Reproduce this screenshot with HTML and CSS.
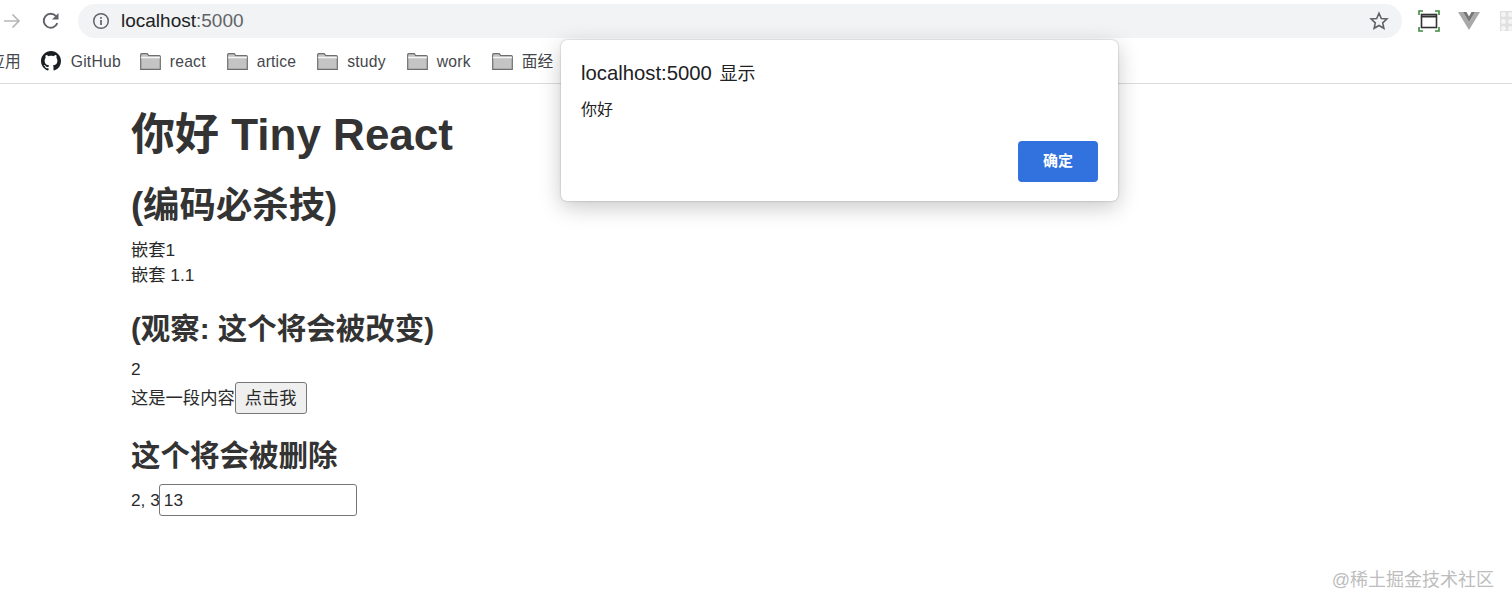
FILE: index.html
```html
<!DOCTYPE html>
<html lang="zh">
<head>
<meta charset="utf-8">
<title>Tiny React</title>
<link rel="stylesheet" href="styles.css">
</head>
<body>
<header class="chrome">
  <div class="toolbar">
    <svg class="back" width="18" height="18" viewBox="0 0 18 18"><path d="M1 9h15M9.500 2.500 16 9l-6.500 6.500" fill="none" stroke="#b4b6b8" stroke-width="1.700"/></svg>
    <svg class="reload" width="20" height="20" viewBox="0 0 20 20"><path d="M16.300 12.200A7 7 0 1 1 15 5.100" fill="none" stroke="#5f6368" stroke-width="1.900"/><path d="M17.500 2v6.500h-6.500z" fill="#5f6368"/></svg>
    <div class="omnibox">
      <svg class="info" width="18" height="18" viewBox="0 0 18 18"><circle cx="9" cy="9" r="7.300" fill="none" stroke="#5f6368" stroke-width="1.500"/><path d="M9 8v5M9 5v1.700" fill="none" stroke="#5f6368" stroke-width="1.700"/></svg>
      <span class="url">localhost<span class="port">:5000</span></span>
      <svg class="star" width="20" height="20" viewBox="0 0 20 20"><path d="M10 2.300l2.300 5.200 5.600.5-4.200 3.800 1.200 5.500L10 14.500l-4.900 2.800 1.200-5.500L2.100 8l5.600-.5z" fill="none" stroke="#5f6368" stroke-width="1.600"/></svg>
    </div>
    <svg class="ext-capture" width="22" height="22" viewBox="0 0 22 22"><path d="M1 5V1h4M17 1h4v4M21 17v4h-4M5 21H1v-4" fill="none" stroke="#3f8a3f" stroke-width="1.600"/><rect x="3.500" y="4.500" width="15" height="13" fill="none" stroke="#333" stroke-width="1.600"/><path d="M3.500 6.500h15" stroke="#333" stroke-width="2"/></svg>
    <svg class="ext-vue" width="22" height="20" viewBox="0 0 22 20"><path d="M0 1h5l6 10 6-10h5L11 19z" fill="#a9a9a9"/><path d="M5 1h3.500L11 5.500 13.500 1H17l-6 10z" fill="#777"/></svg>
    <div class="ext-grey"></div>
  </div>
  <nav class="bookmarks">
    <span class="mark apps">应用</span>
    <span class="mark github">
      <svg width="20" height="20" viewBox="0 0 16 16"><path fill="#1b1f23" d="M8 0C3.580 0 0 3.580 0 8c0 3.540 2.290 6.530 5.470 7.590.4.070.55-.17.55-.38 0-.19-.01-.82-.01-1.490-2.010.37-2.530-.49-2.690-.94-.09-.23-.48-.94-.82-1.130-.28-.15-.68-.52-.01-.53.630-.01 1.080.58 1.230.82.720 1.210 1.870.87 2.330.66.070-.52.280-.87.510-1.070-1.780-.2-3.640-.89-3.640-3.950 0-.87.310-1.590.820-2.150-.080-.2-.360-1.020.080-2.120 0 0 .670-.21 2.200.82.640-.18 1.320-.27 2-.27s1.360.09 2 .27c1.530-1.040 2.200-.82 2.200-.82.440 1.100.160 1.920.080 2.120.510.560.820 1.270.820 2.150 0 3.070-1.870 3.750-3.650 3.950.290.250.540.730.540 1.480 0 1.070-.010 1.930-.010 2.200 0 .210.150.460.550.380A8.010 8.010 0 0 0 16 8c0-4.420-3.580-8-8-8z"/></svg>
      GitHub
    </span>
    <span class="mark"><svg class="folder" width="21" height="17" viewBox="0 0 21 17"><path d="M.7 16.300V1.700q0-1 1-1h5.500l1.500 2h10.600q1 0 1 1v12.600z" fill="#c4c4c4" stroke="#6e6e6e" stroke-width="1.200"/><path d="M1 4.500h19" stroke="#f4f4f4" stroke-width="1.500"/></svg>react</span>
    <span class="mark"><svg class="folder" width="21" height="17" viewBox="0 0 21 17"><path d="M.7 16.300V1.700q0-1 1-1h5.500l1.500 2h10.600q1 0 1 1v12.600z" fill="#c4c4c4" stroke="#6e6e6e" stroke-width="1.200"/><path d="M1 4.500h19" stroke="#f4f4f4" stroke-width="1.500"/></svg>artice</span>
    <span class="mark"><svg class="folder" width="21" height="17" viewBox="0 0 21 17"><path d="M.7 16.300V1.700q0-1 1-1h5.500l1.500 2h10.600q1 0 1 1v12.600z" fill="#c4c4c4" stroke="#6e6e6e" stroke-width="1.200"/><path d="M1 4.500h19" stroke="#f4f4f4" stroke-width="1.500"/></svg>study</span>
    <span class="mark"><svg class="folder" width="21" height="17" viewBox="0 0 21 17"><path d="M.7 16.300V1.700q0-1 1-1h5.500l1.500 2h10.600q1 0 1 1v12.600z" fill="#c4c4c4" stroke="#6e6e6e" stroke-width="1.200"/><path d="M1 4.500h19" stroke="#f4f4f4" stroke-width="1.500"/></svg>work</span>
    <span class="mark"><svg class="folder" width="21" height="17" viewBox="0 0 21 17"><path d="M.7 16.300V1.700q0-1 1-1h5.500l1.500 2h10.600q1 0 1 1v12.600z" fill="#c4c4c4" stroke="#6e6e6e" stroke-width="1.200"/><path d="M1 4.500h19" stroke="#f4f4f4" stroke-width="1.500"/></svg>面经</span>
  </nav>
</header>
<main class="page">
  <h1>你好 Tiny React</h1>
  <h2>(编码必杀技)</h2>
  <div class="nested">
    <div>嵌套1</div>
    <div>嵌套 1.1</div>
  </div>
  <h3>(观察: 这个将会被改变)</h3>
  <div>2</div>
  <div class="button-row">这是一段内容<button class="click" type="button">点击我</button></div>
  <h3 class="removed">这个将会被删除</h3>
  <div class="input-row">2, 3<input class="field" type="text" value="13"></div>
</main>
<aside class="dialog">
  <div class="dialog-title">localhost:5000 <span class="dialog-title-cjk">显示</span></div>
  <div class="dialog-body">你好</div>
  <div class="dialog-actions"><button class="ok" type="button">确定</button></div>
</aside>
<div class="watermark">@稀土掘金技术社区</div>
</body>
</html>
```
FILE: styles.css
```css
* { box-sizing: border-box; }
html, body { margin: 0; height: 100%; }
body {
  position: relative;
  overflow: hidden;
  background: #fff;
  color: #2a2a2a;
  font-family: "Liberation Sans", "Noto Sans CJK SC", sans-serif;
  font-size: 17.300px;
  line-height: 25px;
}
.chrome { height: 84px; border-bottom: 1px solid #dadce0; overflow: hidden; }
.toolbar { display: flex; align-items: center; height: 42px; }
.back { margin-left: 3px; flex: none; }
.reload { margin-left: 20px; flex: none; }
.omnibox {
  display: flex; align-items: center;
  margin-left: 17px;
  width: 1324px; height: 34px; flex: none;
  border-radius: 17px; background: #f1f3f4;
  padding: 0 13px 0 14px;
}
.url { margin-left: 11px; padding-bottom: 1px; font-size: 19px; color: #202124; flex: 1; }
.port { color: #5f6368; }
.ext-capture { margin-left: 16px; flex: none; }
.ext-vue { margin-left: 18px; flex: none; }
.ext-grey {
  margin-left: 20px; width: 22px; height: 20px; flex: none;
  background: radial-gradient(circle at 50% 50%, #f4f4f4 2px, #e0e0e0 3px) 0 0 / 7px 7px;
}
.bookmarks {
  display: flex; align-items: center;
  height: 41px; margin-left: -11px; padding-bottom: 3px;
  color: #44474b; font-size: 15.700px; letter-spacing: .2px;
}
.mark { display: inline-flex; align-items: center; white-space: nowrap; margin-right: 21px; }
.mark.apps { margin-right: 20px; }
.mark.github { margin-right: 19px; }
.mark.github svg { margin-right: 10px; }
.folder { margin-right: 9px; }
.page { padding-left: 131px; }
h1, h2, h3 { margin: 0; font-weight: 700; color: #333; }
h1 { font-size: 44px; line-height: 53px; margin-top: 24px; }
h2 { font-size: 36.400px; line-height: 42px; margin-top: 24px; margin-bottom: 11px; }
h3 { font-size: 29.500px; line-height: 37px; margin-top: 22px; margin-bottom: 10px; }
h3.removed { margin-top: 23px; }
.button-row, .input-row { display: flex; align-items: center; }
.click {
  height: 32px; width: 72px; padding: 0;
  font: inherit; color: #2a2a2a;
  background: #efefef; border: 1px solid #767676; border-radius: 3px;
}
.field {
  width: 198px; height: 32px; margin-left: -1px; padding: 0 4px;
  font: inherit; color: #2a2a2a;
  background: #fff; border: 1px solid #767676; border-radius: 3px;
}
.dialog {
  position: absolute; left: 561px; top: 40px;
  width: 557px; height: 161px;
  padding: 21px 20px;
  background: #fff; border-radius: 6px;
  box-shadow: 0 0 2px rgba(0,0,0,.3), 0 6px 22px rgba(0,0,0,.22);
  display: flex; flex-direction: column;
}
.dialog-title { font-size: 20.300px; color: #202124; line-height: 24px; }
.dialog-title-cjk { font-size: 18px; margin-left: 2px; }
.dialog-body { font-size: 16px; color: #202124; margin-top: 12px; line-height: 24px; }
.dialog-actions { display: flex; justify-content: flex-end; margin-top: 19px; }
.ok {
  width: 80px; height: 41px; padding: 0 0 4px;
  font: 700 15px "Liberation Sans", "Noto Sans CJK SC", sans-serif; color: #fff;
  background: #3172de; border: 0; border-radius: 4px;
}
.watermark { position: absolute; right: 18px; top: 568px; font-size: 18px; color: #bdbdbd; }
```
